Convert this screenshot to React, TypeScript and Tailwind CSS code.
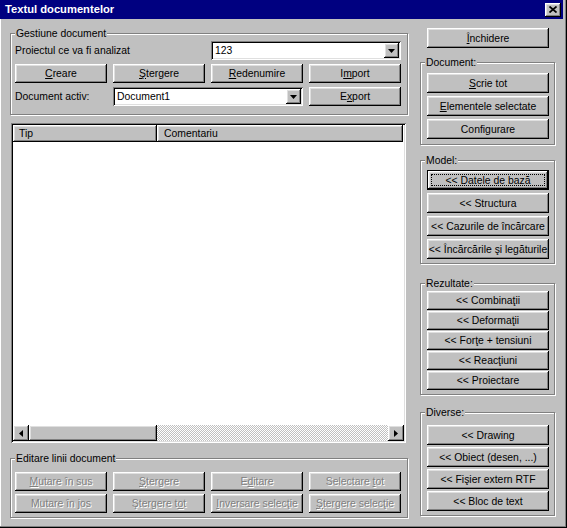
import React from "react";

const raised =
  "bg-[#c0c0c0] shadow-[inset_-1px_-1px_#000,inset_1px_1px_#fff,inset_-2px_-2px_#808080,inset_2px_2px_#dfdfdf]";
const sunken =
  "shadow-[inset_1px_1px_#808080,inset_-1px_-1px_#fff,inset_2px_2px_#000,inset_-2px_-2px_#dfdfdf]";

function Btn({
  children,
  h = "h-[19px]",
  disabled = false,
  focused = false,
  className = "",
}: {
  children: React.ReactNode;
  h?: string;
  disabled?: boolean;
  focused?: boolean;
  className?: string;
}) {
  if (focused) {
    return (
      <div
        className={`${h} ${className} flex border border-black bg-[#c0c0c0] shadow-[inset_-1px_-1px_#000,inset_1px_1px_#fff,inset_-2px_-2px_#808080,inset_2px_2px_#dfdfdf]`}
      >
        <span className="flex-1 m-[3px] border border-dotted border-black flex items-center justify-center whitespace-nowrap">
          <span>{children}</span>
        </span>
      </div>
    );
  }
  return (
    <div
      className={`${h} ${className} ${raised} flex items-center justify-center whitespace-nowrap ${
        disabled ? "text-[#808080] [text-shadow:1px_1px_0_#fff]" : ""
      }`}
    >
      <span>{children}</span>
    </div>
  );
}

function Group({
  label,
  className = "",
  children,
}: {
  label: string;
  className?: string;
  children?: React.ReactNode;
}) {
  return (
    <div
      className={`relative border border-[#808080] shadow-[inset_1px_1px_#fff,1px_1px_#fff] ${className}`}
    >
      <span className="absolute left-[4px] top-[-7px] bg-[#c0c0c0] px-[1px] leading-[13px] whitespace-nowrap">
        {label}
      </span>
      {children}
    </div>
  );
}

function DownArrow() {
  return (
    <svg width="7" height="4" viewBox="0 0 7 4">
      <polygon points="0,0 7,0 3.5,4" fill="#000" />
    </svg>
  );
}

function Combo({ value, className = "" }: { value: string; className?: string }) {
  return (
    <div className={`h-[19px] bg-white ${sunken} flex p-[2px] ${className}`}>
      <span className="flex-1 pl-[2px] flex items-center">{value}</span>
      <span className={`w-[15px] ${raised} flex items-center justify-center`}>
        <DownArrow />
      </span>
    </div>
  );
}

export default function App() {
  return (
    <div
      className={`relative w-[567px] h-[528px] bg-[#c0c0c0] text-black text-[10.4px] leading-[13px] font-['Liberation_Sans',Arial,sans-serif] shadow-[inset_-1px_-1px_#000,inset_-2px_-2px_#808080,inset_1px_0_#fff] overflow-hidden`}
    >
      {/* Title bar */}
      <div className="w-[563px] h-[19px] bg-[#000080] flex items-center pl-[5px] pr-[2px]">
        <span className="flex-1 text-white font-bold text-[11.2px] leading-[13px]">
          Textul documentelor
        </span>
        <span className={`w-[16px] h-[14px] ${raised} flex items-center justify-center`}>
          <svg width="8" height="7" viewBox="0 0 8 7">
            <path d="M0.5 0.5L7.5 6.5M7.5 0.5L0.5 6.5" stroke="#000" strokeWidth="1.7" />
          </svg>
        </span>
      </div>

      <div className="flex items-start">
        {/* Left column */}
        <div className="ml-[10px] w-[398px] flex flex-col">
          <Group label="Gestiune document" className="mt-[14px] h-[82px]">
            <div className="grid grid-cols-4 gap-x-[6px] gap-y-[4px] w-[386px] ml-[4px] mt-[7px]">
              <div className="col-span-2 flex items-center">Proiectul ce va fi analizat</div>
              <Combo value="123" className="col-span-2" />
              <Btn>
                <u>C</u>reare
              </Btn>
              <Btn>
                <u>Ş</u>tergere
              </Btn>
              <Btn>
                <u>R</u>edenumire
              </Btn>
              <Btn>
                I<u>m</u>port
              </Btn>
              <div className="flex items-center">Document activ:</div>
              <Combo value="Document1" className="col-span-2" />
              <Btn>
                E<u>x</u>port
              </Btn>
            </div>
          </Group>

          {/* List view */}
          <div className={`mt-[8px] ml-[1px] w-[395px] h-[320px] bg-white ${sunken} p-[2px] flex flex-col`}>
            <div className="h-[17px] flex">
              <div className={`w-[144px] ${raised} flex items-center pl-[6px]`}>Tip</div>
              <div className={`w-[246px] ${raised} flex items-center pl-[7px]`}>Comentariu</div>
            </div>
            <div className="flex-1" />
            <div className="h-[16px] flex">
              <span className={`w-[16px] ${raised} flex items-center justify-center`}>
                <svg width="4" height="7" viewBox="0 0 4 7">
                  <polygon points="4,0 4,7 0,3.5" fill="#000" />
                </svg>
              </span>
              <span className={`w-[128px] ${raised}`} />
              <span className="flex-1 bg-[repeating-conic-gradient(#c0c0c0_0_25%,#fff_0_50%)] bg-[length:2px_2px]" />
              <span className={`w-[16px] ${raised} flex items-center justify-center`}>
                <svg width="4" height="7" viewBox="0 0 4 7">
                  <polygon points="0,0 0,7 4,3.5" fill="#000" />
                </svg>
              </span>
            </div>
          </div>

          <Group label="Editare linii document" className="mt-[15px] h-[60px]">
            <div className="grid grid-cols-4 gap-x-[6px] gap-y-[3px] w-[386px] ml-[4px] mt-[13px]">
              <Btn disabled>
                <u>M</u>utare în sus
              </Btn>
              <Btn disabled>
                <u>Ş</u>tergere
              </Btn>
              <Btn disabled>
                E<u>d</u>itare
              </Btn>
              <Btn disabled>
                Selectare <u>t</u>ot
              </Btn>
              <Btn disabled>
                Mutare în <u>j</u>os
              </Btn>
              <Btn disabled>
                Ştergere t<u>o</u>t
              </Btn>
              <Btn disabled>
                <u>I</u>nversare selecţie
              </Btn>
              <Btn disabled>
                <u>Ş</u>tergere selecţie
              </Btn>
            </div>
          </Group>
        </div>

        {/* Right column */}
        <div className="ml-[12px] w-[135px] flex flex-col">
          <Btn h="h-[20px]" className="mt-[9px] ml-[7px] w-[122px]">
            <u>Î</u>nchidere
          </Btn>

          <Group label="Document:" className="mt-[14px] h-[83px]">
            <div className="flex flex-col gap-[3px] ml-[6px] mt-[10px] w-[122px]">
              <Btn h="h-[20px]">
                <u>S</u>crie tot
              </Btn>
              <Btn h="h-[20px]">
                <u>E</u>lementele selectate
              </Btn>
              <Btn h="h-[20px]">Configurare</Btn>
            </div>
          </Group>

          <Group label="Model:" className="mt-[15px] h-[104px]">
            <div className="flex flex-col gap-[3px] ml-[6px] mt-[9px] w-[122px]">
              <Btn h="h-[20px]" focused>
                &lt;&lt; Datele de bază
              </Btn>
              <Btn h="h-[20px]">&lt;&lt; Structura</Btn>
              <Btn h="h-[20px]">&lt;&lt; Cazurile de încărcare</Btn>
              <Btn h="h-[20px]">&lt;&lt; Încărcările şi legăturile</Btn>
            </div>
          </Group>

          <Group label="Rezultate:" className="mt-[19px] h-[112px]">
            <div className="flex flex-col gap-[1px] ml-[6px] mt-[7px] w-[122px]">
              <Btn>&lt;&lt; Combinaţii</Btn>
              <Btn>&lt;&lt; Deformaţii</Btn>
              <Btn>&lt;&lt; Forţe + tensiuni</Btn>
              <Btn>&lt;&lt; Reacţiuni</Btn>
              <Btn>&lt;&lt; Proiectare</Btn>
            </div>
          </Group>

          <Group label="Diverse:" className="mt-[17px] h-[104px]">
            <div className="flex flex-col gap-[2px] ml-[6px] mt-[12px] w-[122px]">
              <Btn h="h-[20px]">&lt;&lt; Drawing</Btn>
              <Btn h="h-[20px]">&lt;&lt; Obiect (desen, ...)</Btn>
              <Btn h="h-[20px]">&lt;&lt; Fişier extern RTF</Btn>
              <Btn h="h-[20px]">&lt;&lt; Bloc de text</Btn>
            </div>
          </Group>
        </div>
      </div>
    </div>
  );
}
